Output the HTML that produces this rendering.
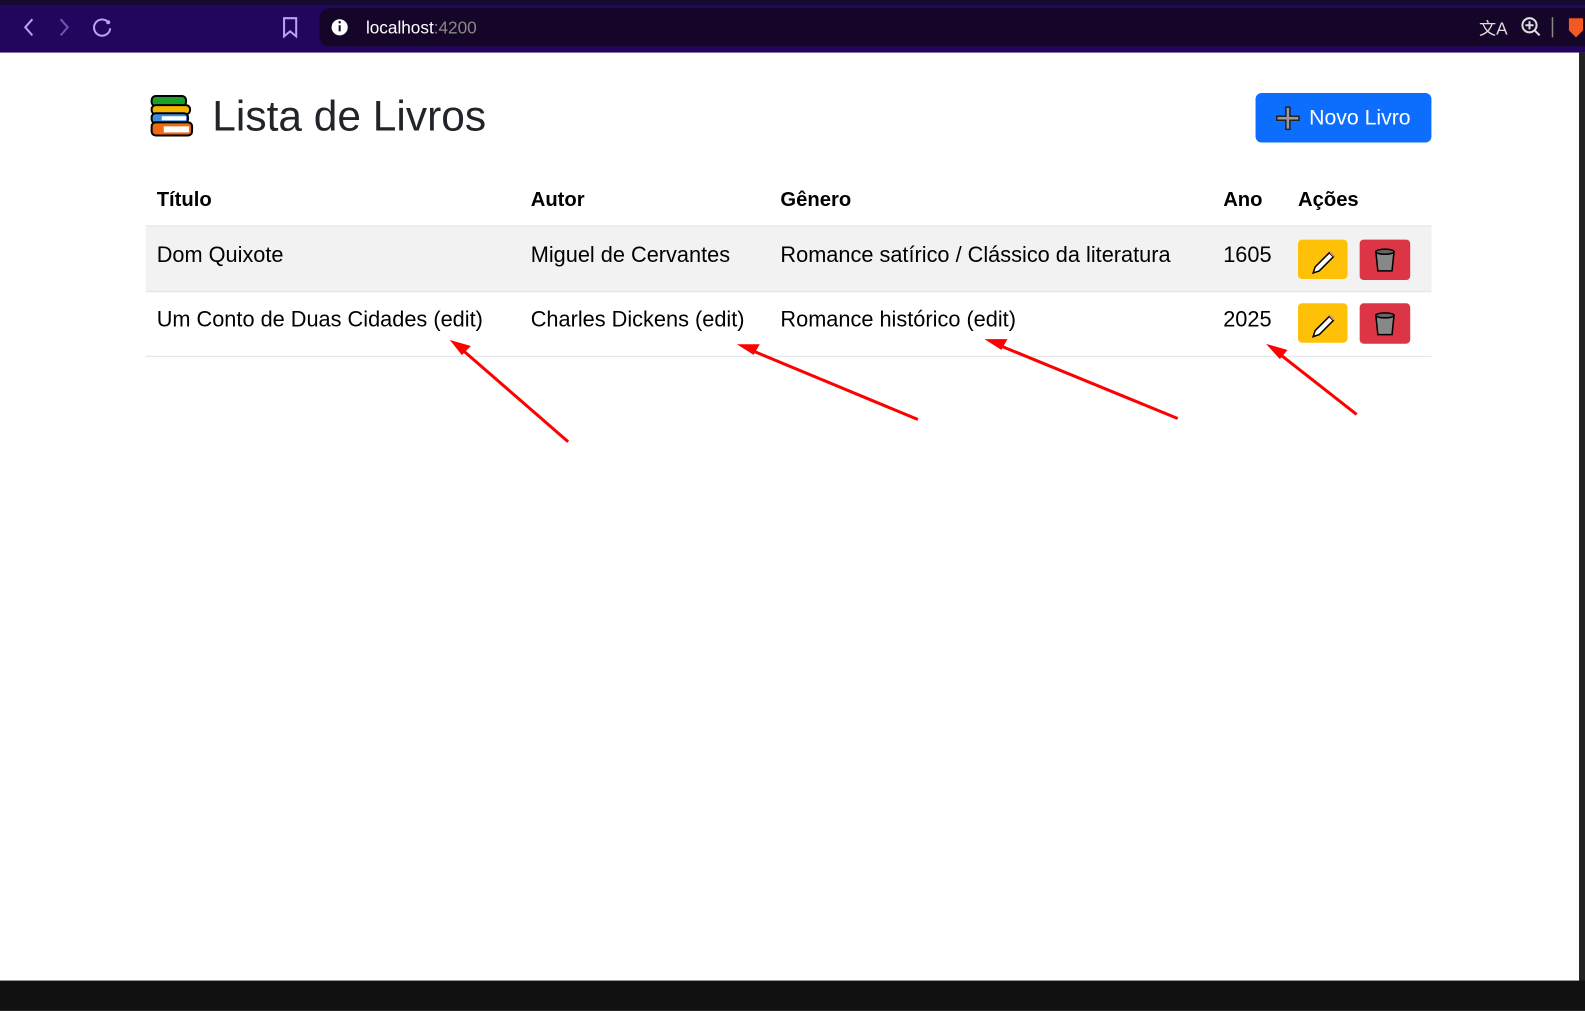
<!DOCTYPE html>
<html><head><meta charset="utf-8"><style>
body{margin:0;width:1585px;height:986px;position:relative;overflow:hidden;background:#fff;font-family:"Segoe UI","Liberation Sans",sans-serif;color:#212529}
#w{position:absolute;left:0;top:0;width:1568px;height:975px;transform:scale(1.0109);transform-origin:0 0}
.top{position:absolute;left:0;top:0;width:1568px;height:52px;background:#22065e;border-top:5px solid #170a30;box-sizing:border-box}
.addr{position:absolute;left:316px;top:3px;width:1252px;height:38px;background:#150529;border-radius:10px 0 0 10px}
.abs{position:absolute}
.strip{position:absolute;left:1562px;top:52px;width:10px;height:934px;background:#222}
.bottom{position:absolute;left:0;top:970px;width:1600px;height:30px;background:#111}
h1{position:absolute;left:210px;top:89px;margin:0;font-size:42px;font-weight:500;line-height:52px}
.btn{position:absolute;left:1242px;top:92px;width:174px;height:49px;background:#0d6efd;border-radius:6px;color:#fff;font-size:21px;line-height:49px;box-sizing:border-box;padding-left:53px}
.th{position:absolute;top:187px;font-weight:bold;font-size:20px;color:#000}
.td{position:absolute;font-size:21.5px;color:#000}
.line{position:absolute;left:144px;width:1272px;height:1px;background:#dee2e6}
.e{position:absolute;width:49px;height:39px;background:#ffc107;border-radius:4px}
.d{position:absolute;width:50px;height:40px;background:#dc3545;border-radius:4px}
</style></head><body><div id="w">
<div class="top"><div class="addr"></div></div>
<svg class="abs" style="left:0;top:0" width="1568" height="52">
<path d="M32 19l-7 8 7 8" stroke="#b9a3f0" stroke-width="2" fill="none"/>
<path d="M60 19l7 8-7 8" stroke="#6b55b0" stroke-width="2" fill="none"/>
<path d="M107 22a8 8 0 1 0 2 6" stroke="#b9a3f0" stroke-width="2" fill="none"/><circle cx="107" cy="22" r="2" fill="#b9a3f0"/>
<path d="M281 18h12v18l-6-5-6 5z" stroke="#b9a3f0" stroke-width="2" fill="none"/>
<circle cx="336" cy="27" r="8" fill="#fff"/><rect x="335" y="25" width="2" height="6" fill="#150529"/><circle cx="336" cy="22" r="1.2" fill="#150529"/>
<text x="362" y="33" font-family="Liberation Sans" font-size="17" fill="#fff">localhost<tspan fill="#888">:4200</tspan></text>
<text x="1463" y="34" font-family="Liberation Sans" font-size="17" fill="#ddd">文A</text>
<circle cx="1513" cy="25" r="7" stroke="#ddd" stroke-width="2" fill="none"/><path d="M1518 30l5 5M1513 21v8M1509 25h8" stroke="#ddd" stroke-width="2"/>
<rect x="1535" y="17" width="1.5" height="20" fill="#888"/>
<path d="M1552 18h14v12l-7 7-7-7z" fill="#f25a22"/>
</svg>
<div class="strip"></div><div class="bottom"></div>
<svg class="abs" style="left:148px;top:94px" width="46" height="42">
<rect x="2" y="1" width="34" height="10" rx="4" fill="#1aa12a" stroke="#000" stroke-width="2"/>
<rect x="2" y="10" width="38" height="9" rx="4" fill="#f5b400" stroke="#000" stroke-width="2"/>
<rect x="2" y="18" width="36" height="10" rx="4" fill="#3b8fe0" stroke="#000" stroke-width="2"/>
<rect x="2" y="27" width="40" height="13" rx="4" fill="#f06a12" stroke="#000" stroke-width="2"/>
<rect x="14" y="31" width="25" height="6" fill="#fff"/><rect x="12" y="21" width="24" height="4" fill="#fff"/>
</svg>
<h1>Lista de Livros</h1>
<div class="btn">Novo Livro</div>
<svg class="abs" style="left:1262px;top:105px" width="24" height="24"><path d="M10 1h4v9h9v4h-9v9h-4v-9H1v-4h9z" fill="#999" stroke="#222" stroke-width="1.5"/></svg>
<div class="th" style="left:155px">Título</div>
<div class="th" style="left:525px">Autor</div>
<div class="th" style="left:772px">Gênero</div>
<div class="th" style="left:1210px">Ano</div>
<div class="th" style="left:1284px">Ações</div>
<div class="line" style="top:223px"></div>
<div class="abs" style="left:144px;top:224px;width:1272px;height:64px;background:#f2f2f2"></div>
<div class="line" style="top:288px"></div>
<div class="line" style="top:352px"></div>
<div class="td" style="left:155px;top:240px">Dom Quixote</div>
<div class="td" style="left:525px;top:240px">Miguel de Cervantes</div>
<div class="td" style="left:772px;top:240px">Romance satírico / Clássico da literatura</div>
<div class="td" style="left:1210px;top:240px">1605</div>
<div class="td" style="left:155px;top:304px">Um Conto de Duas Cidades (edit)</div>
<div class="td" style="left:525px;top:304px">Charles Dickens (edit)</div>
<div class="td" style="left:772px;top:304px">Romance histórico (edit)</div>
<div class="td" style="left:1210px;top:304px">2025</div>
<div class="e" style="left:1284px;top:237px"></div><div class="d" style="left:1345px;top:237px"></div>
<div class="e" style="left:1284px;top:300px"></div><div class="d" style="left:1345px;top:300px"></div>
<svg class="abs" style="left:0;top:0" width="1568" height="975">
<g id="ic">
<path d="M1299 270l2-6 14-14 4 4-14 14z" fill="#fff" stroke="#000" stroke-width="1.5"/><path d="M1315 250l4 4 1.5-1.5-4-4z" fill="#e88"/>
<path d="M1361 249h18l-2 19h-14z" fill="#888" stroke="#000" stroke-width="1.5"/><ellipse cx="1370" cy="249" rx="9" ry="2.5" fill="#666" stroke="#000" stroke-width="1.5"/>
</g>
<use href="#ic" y="63"/>
<g stroke="#f00" stroke-width="3" fill="#f00">
<line x1="562" y1="437" x2="455" y2="344"/><path d="M449 339l14 4-6 6z"/>
<line x1="908" y1="415" x2="742" y2="346"/><path d="M734 342l15 0-4 7z"/>
<line x1="1165" y1="414" x2="987" y2="341"/><path d="M979 337l15 0-4 7z"/>
<line x1="1342" y1="410" x2="1263" y2="348"/><path d="M1257 343l14 4-5 6z"/>
</g>
</svg>
</div></body></html>
